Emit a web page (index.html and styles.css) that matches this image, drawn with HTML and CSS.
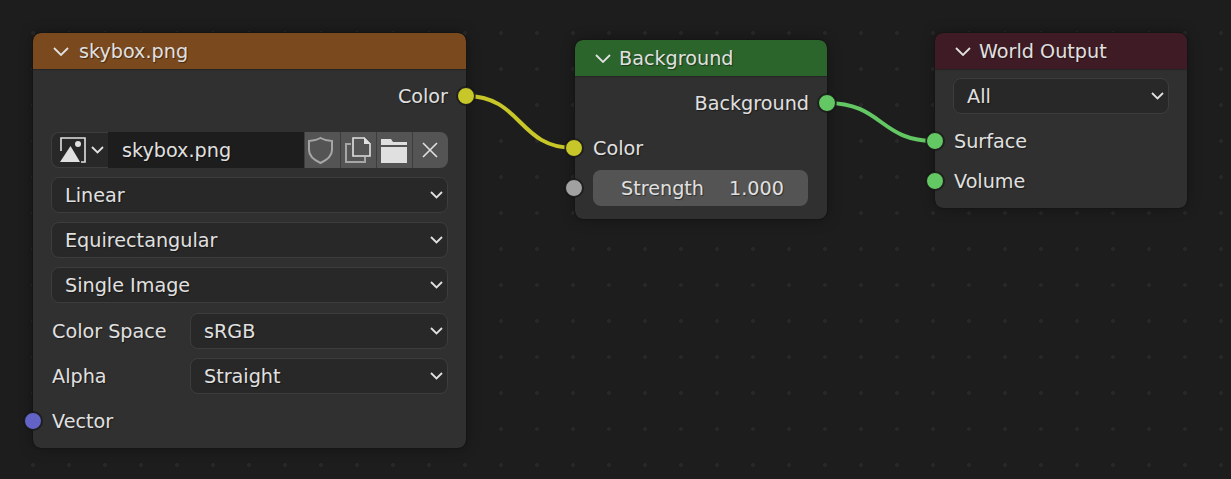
FILE: index.html

```html
<!DOCTYPE html>
<html lang="en">
<head>
  <meta charset="UTF-8">
  <meta name="viewport" content="width=device-width, initial-scale=1.0">
  <title>World Nodes</title>
  <link rel="stylesheet" href="styles.css">
</head>
<body>
  <main class="canvas">
    <svg class="links" width="1231" height="479" viewBox="0 0 1231 479">
      <path class="link-yellow" d="M466 96 C 522 96 518 148 574 148"/>
      <path class="link-green" d="M827 103 C 883 103 879 141 935 141"/>
    </svg>

    <!-- Image texture node -->
    <section class="node node-image">
      <header class="node-header header-brown">
        <svg class="collapse" width="16" height="9" viewBox="0 0 16 9"><path d="M1 1 L8 8 L15 1"/></svg>
        <span>skybox.png</span>
      </header>
      <div class="node-body">
        <div class="row row-output">Color<i class="socket socket-out yellow"></i></div>
        <div class="image-field">
          <div class="image-type">
            <svg width="26" height="26" viewBox="0 0 26 26">
              <path class="frame" d="M1 14 V1 H25 V25 H21"/>
              <path class="solid" d="M0 25 L10.500 9 L20 25 Z"/>
              <circle class="solid" cx="18" cy="7" r="3"/>
            </svg>
            <svg class="chevron" width="13" height="8" viewBox="0 0 13 8"><path d="M1 1 L6.500 6.500 L12 1"/></svg>
          </div>
          <div class="image-name">skybox.png</div>
          <div class="icon-btn">
            <svg width="36" height="36" viewBox="0 0 36 36"><path class="outline-dim" d="M16.500 6 C13 8 9 9 5 9 V18 C5 24 10 28 16.500 31 C23 28 28 24 28 18 V9 C24 9 20 8 16.500 6 Z"/></svg>
          </div>
          <div class="icon-btn">
            <svg width="36" height="36" viewBox="0 0 36 36">
              <path class="outline-dim" d="M11 12 H6 V30 H25 V25"/>
              <path class="outline" d="M13 24 V6 H24 L30 12 V24 Z"/>
              <path class="solid" d="M24 5 L31 12 H24 Z"/>
            </svg>
          </div>
          <div class="icon-btn">
            <svg width="36" height="36" viewBox="0 0 36 36"><path class="solid" d="M5 7 H15 L17 10 H31 V13 H5 Z M5 15 H31 V31 H5 Z"/></svg>
          </div>
          <div class="icon-btn">
            <svg width="36" height="36" viewBox="0 0 36 36"><path class="outline" d="M11 11 L25 25 M25 11 L11 25"/></svg>
          </div>
        </div>
        <div class="select">Linear<svg class="chevron" width="13" height="8" viewBox="0 0 13 8"><path d="M1 1 L6.500 6.500 L12 1"/></svg></div>
        <div class="select">Equirectangular<svg class="chevron" width="13" height="8" viewBox="0 0 13 8"><path d="M1 1 L6.500 6.500 L12 1"/></svg></div>
        <div class="select">Single Image<svg class="chevron" width="13" height="8" viewBox="0 0 13 8"><path d="M1 1 L6.500 6.500 L12 1"/></svg></div>
        <div class="prop prop-first">
          <span>Color Space</span>
          <div class="select">sRGB<svg class="chevron" width="13" height="8" viewBox="0 0 13 8"><path d="M1 1 L6.500 6.500 L12 1"/></svg></div>
        </div>
        <div class="prop">
          <span>Alpha</span>
          <div class="select">Straight<svg class="chevron" width="13" height="8" viewBox="0 0 13 8"><path d="M1 1 L6.500 6.500 L12 1"/></svg></div>
        </div>
        <div class="row">Vector<i class="socket socket-in purple"></i></div>
      </div>
    </section>

    <!-- Background node -->
    <section class="node node-background">
      <header class="node-header header-green header-tight">
        <svg class="collapse" width="16" height="9" viewBox="0 0 16 9"><path d="M1 1 L8 8 L15 1"/></svg>
        <span>Background</span>
      </header>
      <div class="node-body">
        <div class="row row-output">Background<i class="socket socket-out green"></i></div>
        <div class="row row-flush">Color<i class="socket socket-in yellow"></i></div>
        <div class="slider">
          <i class="socket socket-in gray"></i>
          <span>Strength</span><span>1.000</span>
        </div>
      </div>
    </section>

    <!-- World output node -->
    <section class="node node-output">
      <header class="node-header header-maroon header-tight">
        <svg class="collapse" width="16" height="9" viewBox="0 0 16 9"><path d="M1 1 L8 8 L15 1"/></svg>
        <span>World Output</span>
      </header>
      <div class="node-body">
        <div class="select">All<svg class="chevron" width="13" height="8" viewBox="0 0 13 8"><path d="M1 1 L6.500 6.500 L12 1"/></svg></div>
        <div class="row">Surface<i class="socket socket-in green"></i></div>
        <div class="row row-close">Volume<i class="socket socket-in green"></i></div>
      </div>
    </section>
  </main>
</body>
</html>
```

FILE: styles.css

```css
body {
  margin: 0;
  font-family: 'DejaVu Sans', sans-serif;
  font-size: 19.2px;
  color: #e0e0e0;
  background-color: #1d1d1d;
}
.canvas {
  position: relative;
  width: 1231px;
  height: 479px;
  overflow: hidden;
  background-color: #1d1d1d;
  background-image: radial-gradient(circle, #282828 1.6px, transparent 1.7px);
  background-size: 36px 36px;
  background-position: 15px 15px;
}
.links {
  position: absolute;
  left: 0;
  top: 0;
}
.links path {
  fill: none;
  stroke-width: 4;
}
.link-yellow {
  stroke: #c7c729;
}
.link-green {
  stroke: #63c763;
}

.node {
  position: absolute;
  background-color: #303030;
  border-radius: 8px;
  outline: 1px solid #151515;
  box-shadow: 0 0 14px rgba(0, 0, 0, 0.35);
  text-shadow: 1px 1px 1px rgba(0, 0, 0, 0.45);
}
.node-image {
  left: 33px;
  top: 33px;
  width: 433px;
  height: 415px;
}
.node-background {
  left: 575px;
  top: 40px;
  width: 252px;
  height: 179px;
}
.node-output {
  left: 935px;
  top: 33px;
  width: 252px;
  height: 175px;
}
.node-header {
  display: flex;
  align-items: center;
  gap: 10px;
  height: 36px;
  padding-left: 20px;
  border-radius: 8px 8px 0 0;
  box-shadow: 0 1px 1px rgba(0, 0, 0, 0.25);
}
.header-tight {
  gap: 8px;
}
.header-brown {
  background-color: #7a4a1e;
}
.header-green {
  background-color: #2b652b;
}
.header-maroon {
  background-color: #3f1c25;
}
.collapse path,
.chevron path {
  fill: none;
  stroke: #e0e0e0;
  stroke-width: 1.8;
}
.node-body {
  display: flex;
  flex-direction: column;
  gap: 9px;
  padding: 9px 18px 0 18px;
}
.row {
  position: relative;
  display: flex;
  align-items: center;
  height: 36px;
  padding-left: 1px;
}
.row-output {
  justify-content: flex-end;
  padding-left: 0;
}
.row-flush {
  padding-left: 0;
}
.row-close {
  margin-top: -5px;
}

/* sockets sit on the node edge */
.socket {
  position: absolute;
  top: 50%;
  width: 16px;
  height: 16px;
  margin-top: -9px;
  border: 1px solid #1a1a1a;
  border-radius: 50%;
  box-shadow: 0 0 0 1px rgba(20, 20, 20, 0.6);
}
.socket-in {
  left: -27px;
}
.socket-out {
  right: -27px;
}
.node-background .socket-in {
  left: -28px;
}
.yellow {
  background-color: #c7c729;
}
.green {
  background-color: #63c763;
}
.purple {
  background-color: #6363c7;
}
.gray {
  background-color: #a1a1a1;
}

.select {
  display: flex;
  align-items: center;
  justify-content: space-between;
  flex: 1;
  min-height: 36px;
  box-sizing: border-box;
  padding: 0 4px 0 13px;
  background-color: #282828;
  border: 1px solid #3d3d3d;
  border-radius: 8px;
}
.prop {
  display: flex;
  align-items: center;
  height: 36px;
}
.prop-first {
  margin-top: 1px;
}
.prop span {
  width: 139px;
  padding-left: 1px;
  box-sizing: border-box;
}

.image-field {
  display: flex;
  height: 36px;
  margin-top: 9px;
}
.image-type {
  display: flex;
  align-items: center;
  gap: 5px;
  width: 57px;
  box-sizing: border-box;
  padding-left: 8px;
  background-color: #282828;
  border: 1px solid #3d3d3d;
  border-right: none;
  border-radius: 8px 0 0 8px;
}
.image-name {
  display: flex;
  align-items: center;
  flex: 1;
  padding-left: 14px;
  background-color: #1d1d1d;
}
.icon-btn {
  width: 36px;
  height: 36px;
  background-color: #545454;
  border-left: 1px solid #3d3d3d;
  box-sizing: border-box;
}
.icon-btn svg {
  display: block;
  margin-left: -1px;
}
.icon-btn:last-child {
  border-radius: 0 8px 8px 0;
}
.frame,
.outline {
  fill: none;
  stroke: #e0e0e0;
  stroke-width: 1.6;
}
.outline-dim {
  fill: none;
  stroke: #a6a6a6;
  stroke-width: 2;
}
.solid {
  fill: #e0e0e0;
}

.slider {
  position: relative;
  display: flex;
  align-items: center;
  justify-content: space-between;
  height: 36px;
  margin: -5px 1px 0 0;
  padding: 0 24px 0 28px;
  background-color: #545454;
  border-radius: 8px;
}
```
